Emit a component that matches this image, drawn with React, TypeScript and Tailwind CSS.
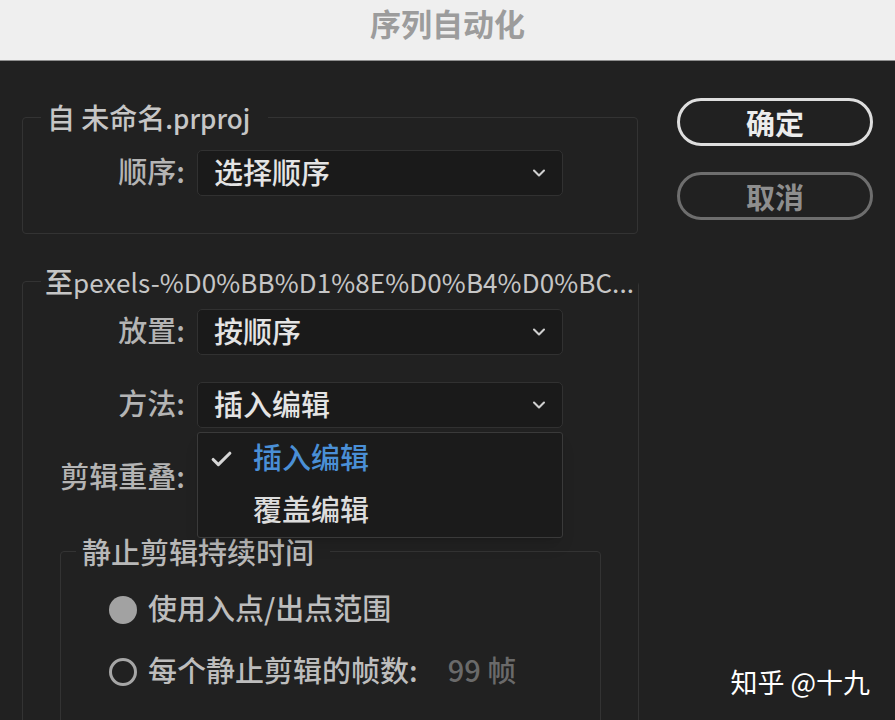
import { Check, ChevronDown } from 'lucide-react'
import type { ReactNode } from 'react'

const font = { fontFamily: '"Noto Sans CJK SC", "Noto Sans", sans-serif' }

function Select({ value, children }: { value: string; children?: ReactNode }) {
  return (
    <div className="relative w-[366px]">
      <div className="flex h-[46px] items-center justify-between rounded-[5px] border border-[#313131] bg-[#1a1a1a] pb-[5px] pl-[16px] pr-[13px]">
        <span className="text-[29px] font-medium leading-[36px] text-[#e4e4e4]">{value}</span>
        <ChevronDown className="mt-[5px] h-[20px] w-[20px] text-[#cfcfcf]" strokeWidth={2.5} />
      </div>
      {children}
    </div>
  )
}

function Row({ label, value, children }: { label: string; value: string; children?: ReactNode }) {
  return (
    <div className="flex items-center gap-[12px]">
      <div className="w-[144px] pb-[6px] text-right text-[29px] font-medium leading-[36px] text-[#b4b4b4]">{label}</div>
      <Select value={value}>{children}</Select>
    </div>
  )
}

function Radio({ checked, children }: { checked?: boolean; children: ReactNode }) {
  return (
    <div className="flex h-[40px] items-center gap-[11px] pl-[33px]">
      {checked ? (
        <span className="h-[28px] w-[28px] rounded-full bg-[#a2a2a2]" />
      ) : (
        <span className="h-[28px] w-[28px] rounded-full border-[3px] border-[#a6a6a6]" />
      )}
      <span className="whitespace-nowrap pb-[6px] text-[29px] font-medium leading-[36px] text-[#bdbdbd]">{children}</span>
    </div>
  )
}

export default function App() {
  return (
    <div className="relative h-[720px] w-[895px] overflow-hidden bg-[#212121]" style={font}>
      <div className="flex h-[61px] items-center justify-center border-b border-[#8f8f8f] bg-[#efefef] pb-[14px]">
        <span className="text-[31px] font-bold text-[#9c9c9c]">序列自动化</span>
      </div>

      <div className="flex pt-[37px]">
        <div className="w-[638px] pl-[22px] pt-[3px]">
          <fieldset className="rounded-[4px] border border-[#333333] pb-[37px] pl-[18px]">
            <legend className="whitespace-nowrap px-[6px] pr-[18px] text-[28px] font-medium leading-[32px] text-[#c6c6c6]">
              自 未命名<span className="text-[26px]">.prproj</span>
            </legend>
            <div className="pt-[16px]">
              <Row label="顺序:" value="选择顺序" />
            </div>
          </fieldset>

          <fieldset className="mt-[31px] h-[500px] rounded-[4px] border border-[#333333] pl-[18px]">
            <legend className="whitespace-nowrap px-[4px] text-[28px] font-medium leading-[32px] text-[#c6c6c6]">
              至<span className="text-[26px] font-normal tracking-[0.1px]">pexels-%D0%BB%D1%8E%D0%B4%D0%BC...</span>
            </legend>
            <div className="flex flex-col gap-[27px] pt-[11px]">
              <Row label="放置:" value="按顺序" />
              <Row label="方法:" value="插入编辑">
                <div className="absolute left-0 top-[50px] z-10 w-[366px] rounded-[3px] border border-[#3a3a3a] bg-[#1b1b1b] shadow-lg">
                  <div className="flex h-[52px] items-center pb-[5px]">
                    <Check className="ml-[11px] mt-[6px] h-[25px] w-[25px] text-[#d6d6d6]" strokeWidth={3} />
                    <span className="ml-[19px] text-[29px] font-medium text-[#4a8fd6]">插入编辑</span>
                  </div>
                  <div className="flex h-[52px] items-center pb-[4px]">
                    <span className="ml-[55px] text-[29px] font-medium text-[#dcdcdc]">覆盖编辑</span>
                  </div>
                </div>
              </Row>
              <Row label="剪辑重叠:" value="" />
            </div>

            <fieldset className="ml-[19px] mt-[34px] h-[300px] w-[541px] rounded-[4px] border border-[#333333] pl-[15px]">
              <legend className="whitespace-nowrap px-[6px] pr-[16px] text-[29px] font-medium leading-[32px] text-[#b8b8b8]">
                静止剪辑持续时间
              </legend>
              <div className="flex flex-col gap-[22px] pt-[23px]">
                <Radio checked>使用入点/出点范围</Radio>
                <Radio>
                  每个静止剪辑的帧数:
                  <span className="ml-[30px] text-[#6a6a6a]">99 帧</span>
                </Radio>
              </div>
            </fieldset>
          </fieldset>
        </div>

        <div className="ml-[39px] flex w-[196px] flex-col gap-[26px]">
          <button
            type="button"
            className="h-[48px] rounded-full border-[3px] border-[#dedede] pb-[4px] text-[29px] font-bold text-[#ececec]"
          >
            确定
          </button>
          <button
            type="button"
            className="h-[48px] rounded-full border-[3px] border-[#6e6e6e] pb-[4px] text-[29px] font-bold text-[#8e8e8e]"
          >
            取消
          </button>
        </div>
      </div>

      <div className="absolute right-[25px] top-[662px] text-[27px] text-white">知乎 @十九</div>
    </div>
  )
}
